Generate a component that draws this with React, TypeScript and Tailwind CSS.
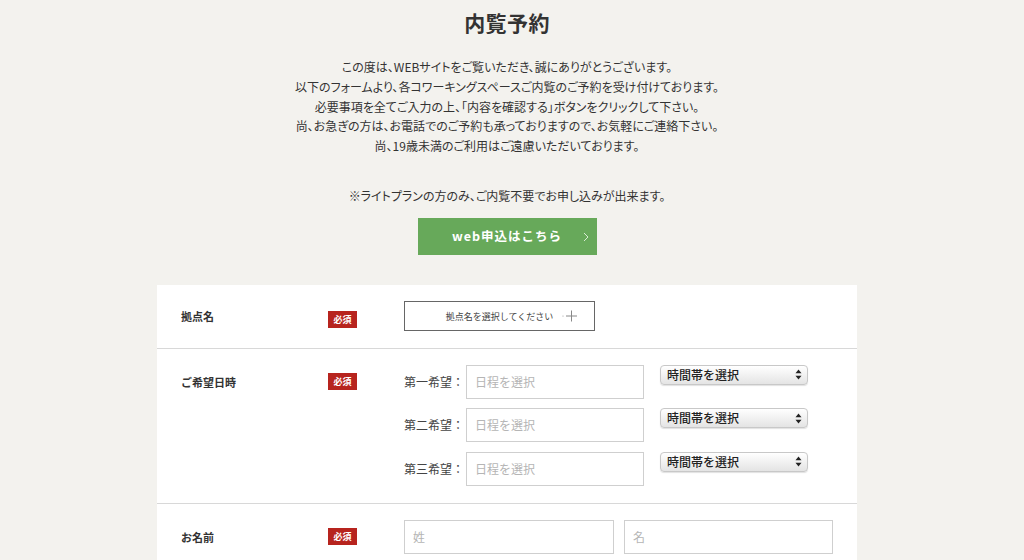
import React from "react";

const font = { fontFamily: '"Noto Sans CJK JP", "Noto Sans", sans-serif' };

const Badge = () => (
  <span className="inline-flex h-[17px] w-[29px] items-center justify-center bg-[#b7241e] text-[9px] font-bold leading-none text-white">
    必須
  </span>
);

const TimeSelect = () => (
  <div className="flex h-[20px] w-[148px] items-center justify-between rounded-[4px] border border-[#c8c8c8] bg-gradient-to-b from-white to-[#e4e4e4] pl-[6px] pr-[5px] shadow-[0_1px_1px_rgba(0,0,0,0.12)]">
    <span className="text-[12px] font-medium leading-none text-[#222]">時間帯を選択</span>
    <svg width="7" height="11" viewBox="0 0 7 11">
      <path d="M3.5 0.5 L6.5 4.3 H0.5 Z" fill="#222" />
      <path d="M3.5 10.5 L6.5 6.7 H0.5 Z" fill="#222" />
    </svg>
  </div>
);

const DateRow = ({ label }: { label: string }) => (
  <div className="flex items-start">
    <div className="flex h-[34px] w-[62px] items-center text-[12px] text-[#444]">{label}：</div>
    <div className="flex h-[34px] w-[178px] items-center border border-[#cfcfcf] bg-white px-[8px] text-[12px] text-[#b5b5b5]">
      日程を選択
    </div>
    <div className="ml-[16px]">
      <TimeSelect />
    </div>
  </div>
);

export default function App() {
  return (
    <div className="min-h-screen bg-[#f3f2ee] pr-[10px] text-[#333]" style={font}>
      <div className="flex flex-col items-center pt-[6px]">
        <h1 className="text-[21px] font-bold leading-[32px] tracking-[0.02em] text-[#333]">内覧予約</h1>

        <div className="mt-[19px] text-center text-[12px] leading-[19.8px] text-[#333] [font-feature-settings:'palt']">
          <p>この度は、WEBサイトをご覧いただき、誠にありがとうございます。</p>
          <p>以下のフォームより、各コワーキングスペースご内覧のご予約を受け付けております。</p>
          <p>必要事項を全てご入力の上、「内容を確認する」ボタンをクリックして下さい。</p>
          <p>尚、お急ぎの方は、お電話でのご予約も承っておりますので、お気軽にご連絡下さい。</p>
          <p>尚、19歳未満のご利用はご遠慮いただいております。</p>
        </div>

        <p className="mt-[30px] text-[12px] leading-[20px] text-[#333] [font-feature-settings:'palt']">
          ※ライトプランの方のみ、ご内覧不要でお申し込みが出来ます。
        </p>

        <a
          href="#"
          className="relative mt-[12px] flex h-[37px] w-[179px] items-center justify-center bg-[#67a95a] text-[12.5px] font-bold tracking-[0.08em] text-white"
        >
          web申込はこちら
          <svg className="absolute right-[8px] top-[14px]" width="6" height="10" viewBox="0 0 6 10">
            <path d="M1 1 L5 5 L1 9" stroke="#d9ecd3" strokeWidth="1" fill="none" />
          </svg>
        </a>

        <div className="mt-[30px] w-[700px] bg-white">
          {/* 拠点名 */}
          <div className="flex h-[64px] items-center border-b border-[#d8d8d8]">
            <div className="w-[171px] pl-[24px] text-[11px] font-bold">拠点名</div>
            <div className="w-[76px]">
              <Badge />
            </div>
            <div className="relative flex h-[30px] w-[191px] items-center justify-center border border-[#666] bg-white">
              <span className="text-[9px] text-[#444]">拠点名を選択してください</span>
              <svg className="absolute left-[156px] top-[8px]" width="18" height="12" viewBox="0 0 18 12">
                <circle cx="2" cy="6" r="0.6" fill="#999" />
                <path d="M5 6 H16 M10.5 0.5 V11.5" stroke="#888" strokeWidth="1" />
              </svg>
            </div>
          </div>

          {/* ご希望日時 */}
          <div className="flex items-start border-b border-[#d8d8d8] pb-[17px] pt-[16px]">
            <div className="flex h-[34px] w-[171px] items-center pl-[24px] text-[11px] font-bold">ご希望日時</div>
            <div className="flex h-[34px] w-[76px] items-center">
              <Badge />
            </div>
            <div className="flex flex-col gap-[9.5px]">
              <DateRow label="第一希望" />
              <DateRow label="第二希望" />
              <DateRow label="第三希望" />
            </div>
          </div>

          {/* お名前 */}
          <div className="flex items-start pb-[16px] pt-[16px]">
            <div className="flex h-[34px] w-[171px] items-center pl-[24px] text-[11px] font-bold">お名前</div>
            <div className="flex h-[34px] w-[76px] items-center">
              <Badge />
            </div>
            <div className="flex gap-[10px]">
              <div className="flex h-[34px] w-[210px] items-center border border-[#cfcfcf] px-[8px] text-[12px] text-[#b5b5b5]">姓</div>
              <div className="flex h-[34px] w-[209px] items-center border border-[#cfcfcf] px-[8px] text-[12px] text-[#b5b5b5]">名</div>
            </div>
          </div>
        </div>
      </div>
    </div>
  );
}
